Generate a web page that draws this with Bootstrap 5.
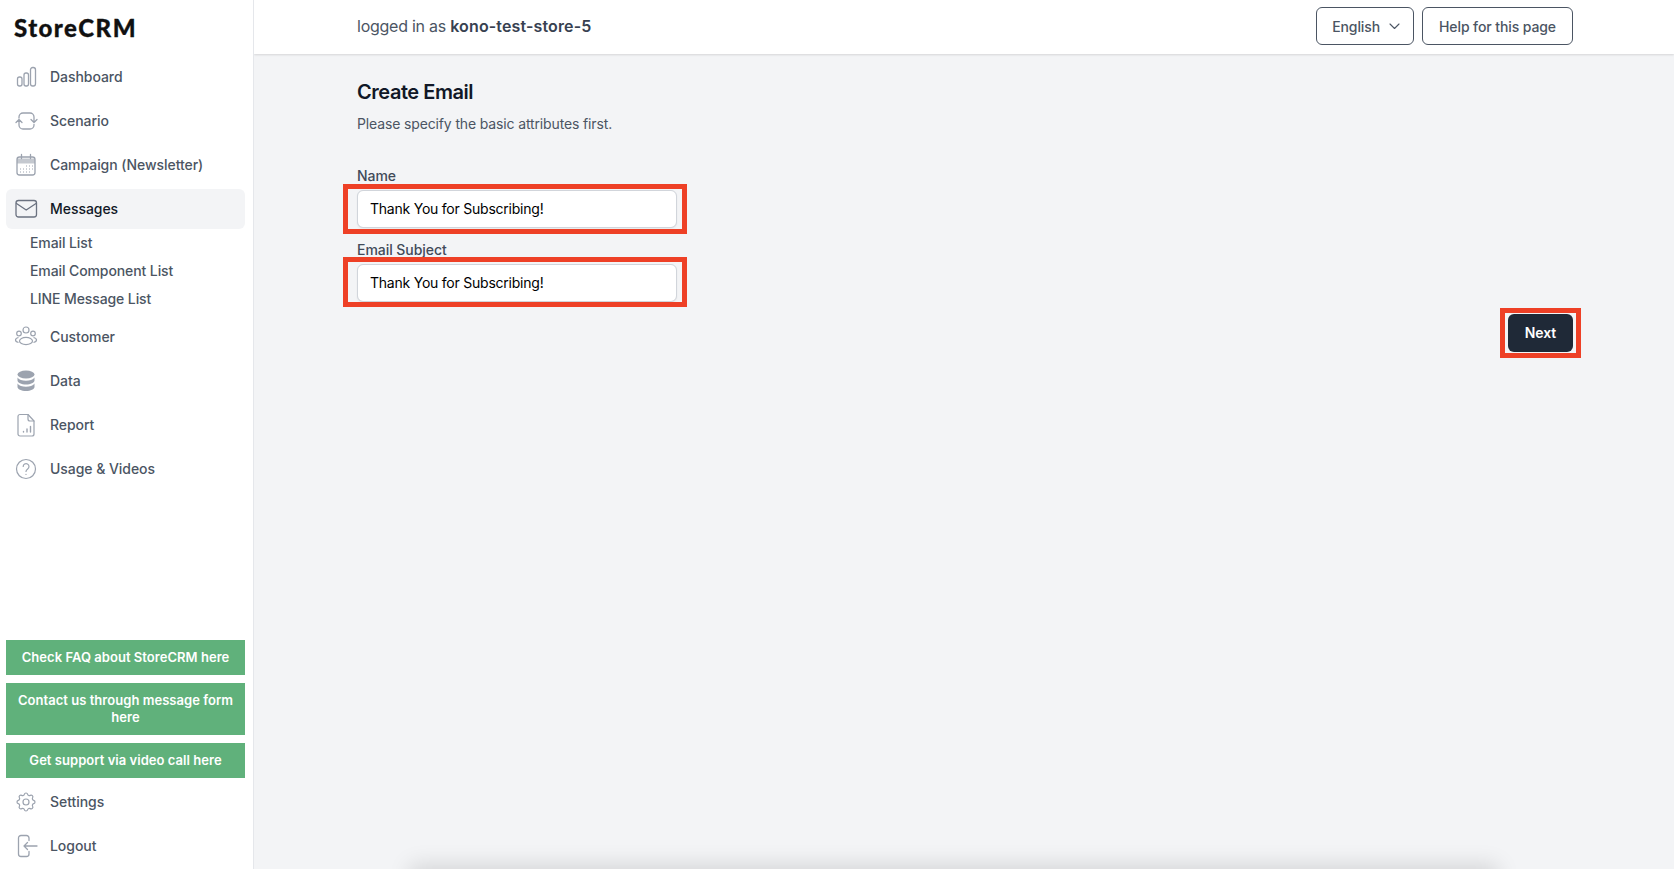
<!DOCTYPE html>
<html lang="en">
<head>
<meta charset="utf-8">
<title>StoreCRM</title>
<link href="https://cdn.jsdelivr.net/npm/bootstrap@5.3.0/dist/css/bootstrap.min.css" rel="stylesheet">
<style>
html,body{height:100%;}
body{font-family:Inter,"Liberation Sans",sans-serif;background:#f3f4f6;color:#4b5563;overflow:hidden;font-size:14px;}
.side{width:254px;height:869px;background:#fff;border-right:1px solid #e5e7eb;flex:none;padding:0 8px 3px 6px;}
.brand{height:57px;padding:17px 0 0 8px;font-family:Lato,sans-serif;font-weight:900;font-size:24px;line-height:22px;color:#111;letter-spacing:1.45px;-webkit-text-stroke:.3px #111;}
.rowlink{height:40px;margin-bottom:4px;padding:0 0 2px 8px;border-radius:6px;color:#4b5563;font-size:14px;font-weight:500;text-decoration:none;letter-spacing:-.05px;}
.rowlink svg{width:24px;height:24px;margin:2px 12px 0 0;flex:none;color:#9ca3af;}
.rowlink.on{background:#f3f4f6;color:#111827;margin-bottom:0;}
.rowlink.on svg{color:#6b7280;}
.sublist{margin-bottom:4px;}
.sublink{height:28px;padding:0 0 2px 24px;color:#4b5563;font-size:14px;font-weight:500;text-decoration:none;letter-spacing:-.1px;}
.greenbtn{background:#60b17b;color:#fff;font-size:13px;line-height:17px;font-weight:600;padding:9px 8px;text-align:center;text-decoration:none;margin-bottom:8px;display:block;letter-spacing:.04px;}
.greenbtn:last-of-type{margin-bottom:4px;}
.mainpane{min-width:0;position:relative;overflow:hidden;height:869px;}
.topbar{height:54px;background:#fff;box-shadow:0 1px 2px rgba(0,0,0,.12);padding:0 101px 2px 103px;font-size:16px;color:#4b5563;}
.topbar b{font-weight:600;color:#374151;letter-spacing:.13px;}
.loginnote{letter-spacing:-.25px;}
.outbtn{height:38px;border:1px solid #4b5563;border-radius:6px;color:#4b5563;background:#fff;font-size:14px;font-weight:500;padding:0 16px;letter-spacing:-.1px;}
.langbtn{padding:0 14px 0 15px;}
.outbtn svg{width:12px;height:12px;margin-left:7px;overflow:visible;}
.pagebody{padding:24px 101px 0 103px;}
.pagetitle{font-size:20px;line-height:28px;font-weight:600;color:#111827;margin:0 0 8px;letter-spacing:-.45px;}
.pagesub{font-size:14px;line-height:20px;margin:0 0 32px;letter-spacing:-.14px;}
.fieldlabel{font-size:14px;line-height:20px;font-weight:500;color:#414a59;margin-bottom:4px;display:block;letter-spacing:-.05px;}
.fieldwrap{position:relative;width:320px;margin-bottom:12px;}
.fieldinput{height:38px;border-radius:6px;border:1px solid #d1d5db;color:#000;font-size:14px;padding:0 12px 2px;box-shadow:0 1px 2px rgba(0,0,0,.05);letter-spacing:-.23px;}
.redmark::after{content:"";position:absolute;top:-6px;bottom:-6px;left:-14px;right:-10px;border:5px solid #ee4026;pointer-events:none;}
.redmark.redmark-up::after{top:-7px;bottom:-5px;}
.redmark.redmark-btn::after{top:-6px;bottom:-6px;left:-8px;right:-8px;}
.nextwrap{position:relative;}
.nextbtn{height:38px;width:65px;background:#1f2937;border:0;border-radius:6px;color:#fff;font-size:14px;font-weight:600;padding:0 0 2px;letter-spacing:-.05px;}
.floorshade{position:absolute;left:160px;width:1080px;top:869px;height:20px;box-shadow:0 0 22px 4px rgba(0,0,0,.13);}
</style>
</head>
<body>
<div class="d-flex">
  <aside class="side d-flex flex-column">
    <div class="brand">StoreCRM</div>
    <a class="rowlink d-flex align-items-center" href="#"><svg viewBox="0 0 24 24" fill="none" stroke="currentColor" stroke-width="1.3"><rect x="3.5" y="12" width="4.5" height="9" rx="2"/><rect x="10" y="8" width="4.5" height="13" rx="2"/><rect x="16.5" y="2.5" width="5" height="18.5" rx="2.2"/></svg>Dashboard</a>
    <a class="rowlink d-flex align-items-center" href="#"><svg viewBox="0 0 24 24" fill="none" stroke="currentColor" stroke-width="1.3" stroke-linecap="round" stroke-linejoin="round"><path d="M5 9V8a4 4 0 0 1 4-4h7a4 4 0 0 1 4 4v5.500M17 10.500l3 3 3-3"/><path d="M20 15.500V16a4 4 0 0 1-4 4H9a4 4 0 0 1-4-4v-5.500M2 13.500l3-3 3 3"/></svg>Scenario</a>
    <a class="rowlink d-flex align-items-center" href="#"><svg viewBox="0 0 24 24" fill="none" stroke="currentColor" stroke-width="1.3"><rect x="3" y="4" width="18" height="18" rx="2.5"/><path d="M3 8h18" stroke-width="5" stroke-opacity=".6"/><path d="M7.500 1.500v4M16.500 1.500v4" stroke-linecap="round"/><path d="M12 13h1M15 13h1M18 13h1M6 16h1M9 16h1M12 16h1M15 16h1M18 16h1M6 19h1M9 19h1M12 19h1M15 19h1" stroke-width="1"/></svg>Campaign (Newsletter)</a>
    <a class="rowlink on d-flex align-items-center" href="#"><svg viewBox="0 0 24 24" fill="none" stroke="currentColor" stroke-width="1.3" stroke-linecap="round" stroke-linejoin="round"><rect x="2" y="3.500" width="20.500" height="16.500" rx="2.500"/><path d="M2.500 6.500 12.200 13 22 6.500"/></svg>Messages</a>
    <div class="sublist d-flex flex-column">
      <a class="sublink d-flex align-items-center" href="#">Email List</a>
      <a class="sublink d-flex align-items-center" href="#">Email Component List</a>
      <a class="sublink d-flex align-items-center" href="#">LINE Message List</a>
    </div>
    <a class="rowlink d-flex align-items-center" href="#"><svg viewBox="0 0 24 24" fill="none" stroke="currentColor" stroke-width="1.2"><circle cx="12" cy="5" r="3"/><circle cx="5" cy="8.500" r="2.300"/><circle cx="19" cy="8.500" r="2.300"/><ellipse cx="12" cy="16" rx="6.500" ry="3.600"/><path d="M4.500 12.500C2.500 13 1.500 14 1.500 15s1 2 3 2.500M19.500 12.500c2 .5 3 1.500 3 2.500s-1 2-3 2.500"/></svg>Customer</a>
    <a class="rowlink d-flex align-items-center" href="#"><svg viewBox="0 0 24 24" fill="currentColor"><ellipse cx="12" cy="5.500" rx="8.500" ry="4"/><path d="M3.500 8.500v3c0 2.200 3.800 4 8.500 4s8.500-1.800 8.500-4v-3c-1.500 2.200-4.800 3.300-8.500 3.300S5 10.700 3.500 8.500z"/><path d="M3.500 14.500v3.500c0 2.200 3.800 4 8.500 4s8.500-1.800 8.500-4v-3.500c-1.500 2.200-4.800 3.300-8.500 3.300s-7-1.100-8.500-3.300z"/></svg>Data</a>
    <a class="rowlink d-flex align-items-center" href="#"><svg viewBox="0 0 24 24" fill="none" stroke="currentColor" stroke-width="1.2" stroke-linejoin="round" stroke-linecap="round"><path d="M6 1.500h8l6 6.500v13a2 2 0 0 1-2 2H6a2 2 0 0 1-2-2V3.500a2 2 0 0 1 2-2z"/><path d="M14 1.500V6a2 2 0 0 0 2 2h4"/><path d="M9.500 19v-.5M13 19v-3M16.500 19v-5.500" stroke-width="1.400"/></svg>Report</a>
    <a class="rowlink d-flex align-items-center" href="#"><svg viewBox="0 0 24 24" fill="none" stroke="currentColor" stroke-width="1.200" stroke-linecap="round"><circle cx="12" cy="12" r="9.500"/><path d="M9.200 9.500a2.900 2.900 0 1 1 4.500 2.400c-1 .7-1.700 1.300-1.700 2.600M12 17.400v.1"/></svg>Usage &amp; Videos</a>
    <div class="mt-auto">
      <a class="greenbtn" href="#">Check FAQ about StoreCRM here</a>
      <a class="greenbtn" href="#">Contact us through message form here</a>
      <a class="greenbtn" href="#">Get support via video call here</a>
    </div>
    <a class="rowlink d-flex align-items-center" href="#"><svg viewBox="0 0 24 24" fill="none" stroke="currentColor" stroke-width="1.200" stroke-linecap="round" stroke-linejoin="round"><path d="M10.325 4.317c.426-1.756 2.924-1.756 3.350 0a1.724 1.724 0 002.573 1.066c1.543-.94 3.310.826 2.370 2.370a1.724 1.724 0 001.065 2.572c1.756.426 1.756 2.924 0 3.350a1.724 1.724 0 00-1.066 2.573c.94 1.543-.826 3.310-2.370 2.370a1.724 1.724 0 00-2.572 1.065c-.426 1.756-2.924 1.756-3.350 0a1.724 1.724 0 00-2.573-1.066c-1.543.94-3.310-.826-2.370-2.370a1.724 1.724 0 00-1.065-2.572c-1.756-.426-1.756-2.924 0-3.350a1.724 1.724 0 001.066-2.573c-.94-1.543.826-3.310 2.370-2.370.996.608 2.296.07 2.572-1.065z"/><path d="M15 12a3 3 0 11-6 0 3 3 0 016 0z"/></svg>Settings</a>
    <a class="rowlink d-flex align-items-center mb-0" href="#"><svg viewBox="0 0 24 24" fill="none" stroke="currentColor" stroke-width="1.300" stroke-linecap="round" stroke-linejoin="round"><path d="M15 6.500V4a2.500 2.500 0 0 0-2.500-2.500H7A2.500 2.500 0 0 0 4.500 4v16A2.500 2.500 0 0 0 7 22.500h5.500A2.500 2.500 0 0 0 15 20v-2.500"/><path d="M23 12H10M13.500 8.500 10 12l3.500 3.500"/></svg>Logout</a>
  </aside>
  <main class="mainpane flex-grow-1">
    <header class="topbar d-flex align-items-center justify-content-between">
      <div class="loginnote">logged in as <b>kono-test-store-5</b></div>
      <div class="d-flex gap-2">
        <button class="outbtn langbtn btn d-flex align-items-center" type="button">English<svg viewBox="0 0 12 12" fill="none" stroke="currentColor" stroke-width="1.100" stroke-linecap="round" stroke-linejoin="round"><path d="M3 4l4.500 4.500L12 4"/></svg></button>
        <button class="outbtn btn" type="button">Help for this page</button>
      </div>
    </header>
    <section class="pagebody">
      <h1 class="pagetitle">Create Email</h1>
      <p class="pagesub">Please specify the basic attributes first.</p>
      <label class="fieldlabel" for="nm">Name</label>
      <div class="fieldwrap redmark"><input id="nm" class="form-control fieldinput" value="Thank You for Subscribing!"></div>
      <label class="fieldlabel" for="sj">Email Subject</label>
      <div class="fieldwrap redmark redmark-up"><input id="sj" class="form-control fieldinput" value="Thank You for Subscribing!"></div>
      <div class="d-flex justify-content-end">
        <div class="nextwrap redmark redmark-btn"><button class="nextbtn btn d-block" type="button">Next</button></div>
      </div>
    </section>
    <div class="floorshade"></div>
  </main>
</div>
<script src="https://cdn.jsdelivr.net/npm/bootstrap@5.3.0/dist/js/bootstrap.bundle.min.js"></script>
</body>
</html>
